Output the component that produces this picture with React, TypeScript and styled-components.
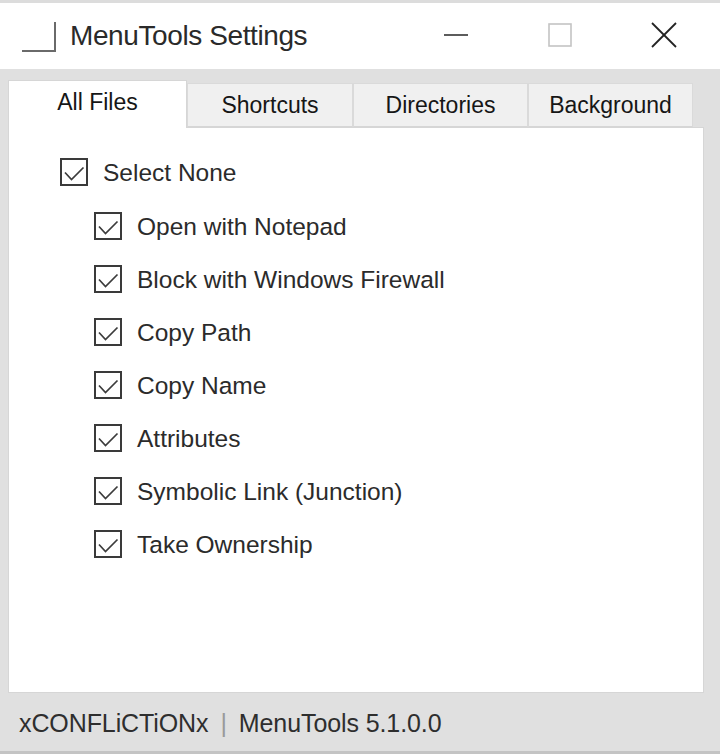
import React from "react";
import styled, { createGlobalStyle } from "styled-components";

const Global = createGlobalStyle`
  html, body { margin: 0; padding: 0; background: #e4e4e4; }
  * { box-sizing: border-box; }
`;

const Window = styled.div`
  width: 720px;
  height: 754px;
  display: flex;
  flex-direction: column;
  background: #e0e0e0;
  font-family: "Liberation Sans", Arial, sans-serif;
  color: #1e1e1e;
  border-bottom: 3px solid #c4c4c4;
`;

const TitleBar = styled.div`
  height: 69px;
  flex: none;
  background: #ffffff;
  border-top: 3px solid #dcdcdc;
  display: flex;
  align-items: center;
  padding-left: 22px;
`;

const AppIcon = styled.div`
  width: 34px;
  height: 30px;
  margin-top: 2px;
  border-right: 2px solid #6a6a6a;
  border-bottom: 2px solid #6a6a6a;
  flex: none;
`;

const Title = styled.div`
  margin-left: 14px;
  font-size: 28px;
  color: #2a2a2a;
  letter-spacing: -0.4px;
  flex: 1;
`;

const Controls = styled.div`
  display: flex;
  padding-right: 4px;
  align-self: stretch;
`;

const CtrlButton = styled.div`
  width: 104px;
  display: flex;
  align-items: center;
  justify-content: center;
  padding-bottom: 2px;
`;

const Body = styled.div`
  flex: 1;
  display: flex;
  flex-direction: column;
  padding: 11px 16px 0 8px;
  min-height: 0;
`;

const TabStrip = styled.div`
  display: flex;
  align-items: flex-end;
  height: 47px;
  flex: none;
`;

const Tab = styled.div<{ $active?: boolean; $w: number }>`
  width: ${(p) => p.$w}px;
  height: ${(p) => (p.$active ? 48 : 44)}px;
  background: ${(p) => (p.$active ? "#ffffff" : "#f0f0f0")};
  border: 1px solid ${(p) => (p.$active ? "#d6d6d6" : "#dadada")};
  border-bottom: ${(p) => (p.$active ? "none" : "1px solid #d6d6d6")};
  margin-bottom: ${(p) => (p.$active ? "-1px" : "0")};
  position: relative;
  z-index: ${(p) => (p.$active ? 1 : 0)};
  display: flex;
  justify-content: center;
  align-items: ${(p) => (p.$active ? "flex-start" : "center")};
  padding-top: ${(p) => (p.$active ? "8px" : "0")};
  font-size: 23px;
  color: #161616;
  flex: none;
`;

const Panel = styled.div`
  flex: 1;
  background: #ffffff;
  border: 1px solid #d6d6d6;
  padding: 30px 0 0 51px;
  display: flex;
  flex-direction: column;
`;

const Row = styled.div<{ $indent?: boolean; $gap: number }>`
  display: flex;
  align-items: center;
  height: 28px;
  margin-left: ${(p) => (p.$indent ? 34 : 0)}px;
  margin-bottom: ${(p) => p.$gap}px;
  font-size: 24.5px;
  color: #2b2b2b;
`;

const Box = styled.div`
  width: 28px;
  height: 28px;
  border: 2px solid #3a3a3a;
  flex: none;
  margin-right: 15px;
  display: flex;
  align-items: center;
  justify-content: center;
  background: #fff;
`;

const Label = styled.span`
  margin-top: 2px;
`;

const StatusBar = styled.div`
  height: 58px;
  flex: none;
  display: flex;
  align-items: center;
  padding-left: 19px;
  padding-top: 2px;
  font-size: 25px;
  color: #2e2e2e;
  letter-spacing: -0.1px;
`;

const Sep = styled.span`
  color: #9a9a9a;
  margin: 0 12px;
`;

const Check = () => (
  <svg width="24" height="24" viewBox="0 0 24 24">
    <polyline points="3,12.5 9.5,19.5 21.5,7.5" fill="none" stroke="#3c3c3c" strokeWidth="1.7" />
  </svg>
);

const CheckRow = ({ label, indent, gap }: { label: string; indent?: boolean; gap: number }) => (
  <Row $indent={indent} $gap={gap}>
    <Box>
      <Check />
    </Box>
    <Label>{label}</Label>
  </Row>
);

const items = [
  "Open with Notepad",
  "Block with Windows Firewall",
  "Copy Path",
  "Copy Name",
  "Attributes",
  "Symbolic Link (Junction)",
  "Take Ownership",
];

export default function App() {
  return (
    <>
      <Global />
      <Window>
        <TitleBar>
          <AppIcon />
          <Title>MenuTools Settings</Title>
          <Controls>
            <CtrlButton>
              <svg width="24" height="4" viewBox="0 0 24 4">
                <line x1="0" y1="2" x2="24" y2="2" stroke="#333" strokeWidth="1.6" />
              </svg>
            </CtrlButton>
            <CtrlButton>
              <svg width="24" height="24" viewBox="0 0 24 24">
                <rect x="1" y="1" width="22" height="22" fill="none" stroke="#c4c4c4" strokeWidth="1.6" />
              </svg>
            </CtrlButton>
            <CtrlButton>
              <svg width="26" height="26" viewBox="0 0 26 26">
                <line x1="1" y1="1" x2="25" y2="25" stroke="#222" strokeWidth="1.8" />
                <line x1="25" y1="1" x2="1" y2="25" stroke="#222" strokeWidth="1.8" />
              </svg>
            </CtrlButton>
          </Controls>
        </TitleBar>
        <Body>
          <TabStrip>
            <Tab $active $w={179}>All Files</Tab>
            <Tab $w={166}>Shortcuts</Tab>
            <Tab $w={175}>Directories</Tab>
            <Tab $w={165}>Background</Tab>
          </TabStrip>
          <Panel>
            <CheckRow label="Select None" gap={26} />
            {items.map((it) => (
              <CheckRow key={it} label={it} indent gap={25} />
            ))}
          </Panel>
        </Body>
        <StatusBar>
          xCONFLiCTiONx<Sep>|</Sep>MenuTools 5.1.0.0
        </StatusBar>
      </Window>
    </>
  );
}
